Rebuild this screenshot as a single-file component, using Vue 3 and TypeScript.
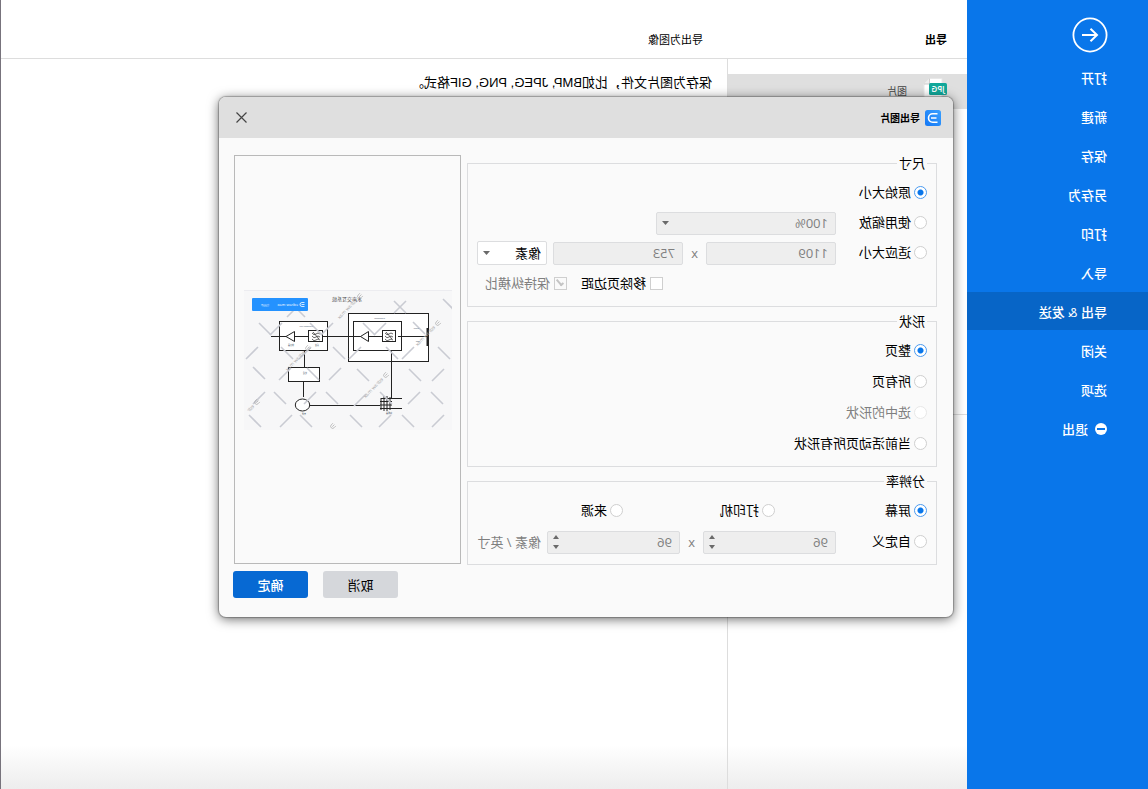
<script setup lang="ts">
import { ref } from 'vue'

const menu = ['打开', '新建', '保存', '另存为', '打印', '导入', '导出 & 发送', '关闭', '选项']
const activeItem = ref('导出 & 发送')

const sizeMode = ref('original')
const shapeMode = ref('page')
const dpiMode = ref('screen')
const removeMargin = ref(false)
const keepRatio = ref(true)

const shapes = [
  { id: 'page', label: '整页', disabled: false },
  { id: 'all', label: '所有页', disabled: false },
  { id: 'selected', label: '选中的形状', disabled: true },
  { id: 'active', label: '当前活动页所有形状', disabled: false },
]

/* Watermark strokes: centre x, centre y, direction (1 rises, -1 falls) */
const strokes: [number, number, number][] = [
  [187, 39, 1], [176, 39, -1], [136, 39, 1], [125, 39, -1], [83, 39, 1], [72, 39, -1], [33, 38, 1],
  [200, 63, -1], [165, 63, 1], [147, 63, -1], [113, 63, 1], [97, 63, -1], [60, 63, 1], [44, 63, -1], [8, 63, 1],
  [193, 83, 1], [167, 84, -1], [139, 84, 1], [117, 84, -1], [89, 85, 1], [37, 85, 1], [14, 85, -1],
  [193, 108, -1], [172, 108, 1], [142, 108, -1], [120, 108, 1], [92, 110, -1], [66, 108, 1], [38, 108, -1], [15, 108, 1],
  [197, 131, 1], [166, 131, -1], [146, 131, 1], [96, 131, 1], [67, 131, -1], [44, 131, 1], [14, 131, -1],
  [159, 21, -1], [153, 21, 1], [52, 17, 1], [52, 17, -1], [3, 15, 1],
]
/* Watermark names: x, y, text that fits before the page edge */
const marks: [number, number, string][] = [
  [144, 58, 'edraw max'],
  [195, 112, 'edr'],
  [119, 136, ''],
  [66, 85, 'edraw max'],
  [14, 33, 'edraw max'],
  [92, 6, 'edraw max'],
]
</script>

<template>
  <div class="page">
    <nav class="sidebar">
      <button class="back" aria-label="返回">
        <svg width="36" height="36" viewBox="0 0 36 36" fill="none" stroke="#fff">
          <circle cx="18" cy="18" r="16.6" stroke-width="1.8" />
          <path d="M26 18H11M17.5 11.8L11 18l6.500 6.200" stroke-width="2" />
        </svg>
      </button>
      <button
        v-for="m in menu"
        :key="m"
        class="item"
        :class="{ active: m === activeItem }"
        @click="activeItem = m"
      >{{ m }}</button>
      <button class="item">
        <svg width="12" height="12" viewBox="0 0 12 12">
          <circle cx="6" cy="6" r="6" fill="#fff" />
          <rect x="2" y="5" width="8" height="2" fill="#0976ea" />
        </svg>
        <span>退出</span>
      </button>
    </nav>

    <div class="main">
      <header class="head">
        <strong class="head-title">导出</strong>
        <span class="head-sub">导出为图像</span>
      </header>
      <div class="columns">
        <section class="formats">
          <a class="format" href="#">
            <svg width="24" height="26" viewBox="0 0 24 26">
              <path d="M5 .5h12.500L23 6v19.500H5z" fill="#fff" stroke="#e8e8e8" />
              <path d="M17.500.5V6H23" fill="#eee" stroke="#ccc" />
              <rect x="0" y="5" width="18" height="12" rx="1.500" fill="#12a89a" />
              <text x="9" y="14" text-anchor="middle" class="jpg">JPG</text>
            </svg>
            <span>图片</span>
          </a>
        </section>
        <section class="detail">保存为图片文件，比如BMP, JPEG, PNG, GIF格式。</section>
      </div>
    </div>

    <div class="dialog" role="dialog" aria-label="导出图片">
      <header class="titlebar">
        <svg width="16" height="16" viewBox="0 0 16 16">
          <defs>
            <linearGradient id="brand" x1="0" y1="0" x2="1" y2="1">
              <stop offset="0" stop-color="#3aa0ff" />
              <stop offset="1" stop-color="#1478f5" />
            </linearGradient>
          </defs>
          <rect width="16" height="16" rx="2.500" fill="url(#brand)" />
          <path d="M3.500 3.800h4.800a4.200 4.200 0 0 1 0 8.400H3.500M4.500 8H10" fill="none" stroke="#fff" stroke-width="1.600" />
        </svg>
        <strong>导出图片</strong>
        <button class="close" aria-label="关闭">
          <svg width="11" height="11" viewBox="0 0 11 11" stroke="#444" stroke-width="1.200">
            <path d="M.5.5l10 10M10.500.5l-10 10" />
          </svg>
        </button>
      </header>

      <div class="body">
        <form class="groups" @submit.prevent>
          <fieldset class="g-size">
            <legend>尺寸</legend>
            <div class="row">
              <label class="opt"><input v-model="sizeMode" type="radio" name="size" value="original">原始大小</label>
            </div>
            <div class="row">
              <label class="opt first"><input v-model="sizeMode" type="radio" name="size" value="zoom">使用缩放</label>
              <span class="field zoom">
                <select disabled aria-label="缩放"><option>100%</option></select>
                <svg class="caret" width="7" height="4" viewBox="0 0 7 4"><path d="M0 0h7L3.500 4z" /></svg>
              </span>
            </div>
            <div class="row">
              <label class="opt first"><input v-model="sizeMode" type="radio" name="size" value="fit">适应大小</label>
              <input class="box grow" type="text" value="1109" disabled aria-label="宽度">
              <span class="by">x</span>
              <input class="box grow" type="text" value="753" disabled aria-label="高度">
              <span class="field unit">
                <select aria-label="单位"><option>像素</option></select>
                <svg class="caret" width="7" height="4" viewBox="0 0 7 4"><path d="M0 0h7L3.500 4z" /></svg>
              </span>
            </div>
            <div class="row checks">
              <label class="opt"><input v-model="removeMargin" type="checkbox">移除页边距</label>
              <label class="opt off"><input v-model="keepRatio" type="checkbox" disabled>保持纵横比</label>
            </div>
          </fieldset>

          <fieldset>
            <legend>形状</legend>
            <div v-for="s in shapes" :key="s.id" class="row">
              <label class="opt" :class="{ off: s.disabled }">
                <input v-model="shapeMode" type="radio" name="shape" :value="s.id" :disabled="s.disabled">{{ s.label }}
              </label>
            </div>
          </fieldset>

          <fieldset>
            <legend>分辨率</legend>
            <div class="row thirds">
              <label class="opt"><input v-model="dpiMode" type="radio" name="dpi" value="screen">屏幕</label>
              <label class="opt"><input v-model="dpiMode" type="radio" name="dpi" value="printer">打印机</label>
              <label class="opt"><input v-model="dpiMode" type="radio" name="dpi" value="source">来源</label>
            </div>
            <div class="row">
              <label class="opt first"><input v-model="dpiMode" type="radio" name="dpi" value="custom">自定义</label>
              <span v-for="n in 2" :key="n" class="field">
                <span v-if="n === 2" class="by">x</span>
                <span class="spin">
                  <input class="box" type="text" value="96" disabled :aria-label="n === 1 ? '水平分辨率' : '垂直分辨率'">
                  <svg class="steps" width="6" height="14" viewBox="0 0 6 14"><path d="M0 4h6L3 0zM0 10h6L3 14z" /></svg>
                </span>
              </span>
              <span class="per">像素 / 英寸</span>
            </div>
          </fieldset>
        </form>

        <div class="side">
          <div class="preview">
            <svg viewBox="0 0 208 140" role="img" aria-label="预览">
              <rect x="0" y="0" width="208" height="140" fill="#f7f7f8" />
              <path d="M0 .5h208" stroke="#ececf0" />
              <rect x="23.500" y="23.500" width="80" height="48" class="w" />
              <rect x="50.500" y="31.500" width="48" height="29" class="w" />
              <rect x="124.500" y="31.500" width="48" height="29" class="w" />
              <rect x="132.500" y="77.500" width="31" height="14" class="w" />
              <g class="l">
                <path d="M24 46.500H54M69 46.500H84M91 46.500H130M143 46.500H157M166 46.500H181" />
                <path d="M60.500 60V108M147.500 60V77M148.500 92V107M72 115.500H142" />
                <path d="M24.500 38V56" stroke-width="2" />
                <path d="M50 108.500H71M50 118.500H72M60 111.500H72M60 115H72M62 107V120M65 106V121M68 106V121M71 108V120" />
                <path d="M83.500 41.500V51.500L91.500 46.500zM157.500 41.500V51.500L166 46.500z" fill="#fff" />
                <rect x="56.500" y="40.500" width="13" height="11" fill="#fff" />
                <rect x="129.500" y="40.500" width="14" height="11" fill="#fff" />
                <path d="M59 44q2-2 4 0t4-1M59 47q2-2 4 0t4-1M59 50q2-2 4 0t4-1M60 49l6-7M132 44q2-2 4 0t4-1M132 47q2-2 4 0t4-1M132 50q2-2 4 0t4-1M133 49l6-7" stroke-width=".7" />
                <ellipse cx="149.500" cy="115" rx="7.200" ry="6" fill="#fff" />
              </g>
              <path
                v-for="(s, i) in strokes"
                :key="i"
                class="x"
                :d="`M${s[0] - 6} ${s[1] + 6 * s[2]}L${s[0] + 6} ${s[1] - 6 * s[2]}`"
              />
              <g v-for="(m, i) in marks" :key="'m' + i" class="mark" :transform="`translate(${m[0]} ${m[1]}) rotate(46)`">
                <path d="M-2-2H.5a2 2 0 0 1 0 4H-2M-2 0h3" />
                <text v-if="m[2]" x="5" y="1.500">{{ m[2] }}</text>
              </g>
              <text x="90" y="11" class="t">水声交互系统</text>
              <rect x="144" y="8" width="56" height="13" rx="1" fill="#2492ff" />
              <path d="M147.500 12.500H150a2 2 0 0 1 0 4H147.500M147.500 14.500h3" fill="none" stroke="#fff" stroke-width=".8" />
              <text x="154" y="16" class="b">edraw max</text>
              <text x="183" y="16" class="b s">亿图图示</text>
              <g class="n">
                <text x="67" y="28.500">Transmitter</text>
                <text x="139" y="37">Processor unit</text>
                <text x="33" y="39">signal</text>
                <text x="32" y="52">data</text>
                <text x="133" y="56">滤波</text>
                <text x="158" y="56">放大器</text>
                <text x="145" y="84">处理</text>
                <text x="60" y="124">换能器</text>
                <text x="146" y="125">电源</text>
              </g>
            </svg>
          </div>
          <div class="actions">
            <button class="btn">取消</button>
            <button class="btn primary">确定</button>
          </div>
        </div>
      </div>
    </div>
  </div>
</template>

<style>
body {
  margin: 0;
  background: #fff;
}
</style>

<style scoped>
.page {
  position: relative;
  display: flex;
  min-height: 100vh;
  overflow: hidden;
  box-sizing: border-box;
  border-right: 1px solid #77737c;
  background: #fff;
  color: #000;
  font: 13px/20px "Open Sans", "Noto Sans CJK SC", sans-serif;
  transform: scaleX(-1);
}
.page *,
.page *::before {
  box-sizing: border-box;
}
button,
input,
select {
  margin: 0;
  font: inherit;
  color: inherit;
}
svg {
  display: block;
  flex: none;
}

.sidebar {
  display: flex;
  flex-direction: column;
  flex: none;
  gap: 1px;
  width: 181px;
  padding-top: 17px;
  background: #0976ea;
  color: #fff;
}
.back {
  width: 36px;
  height: 36px;
  margin: 0 0 4px 40px;
  padding: 0;
  border: 0;
  background: none;
}
.item {
  display: flex;
  align-items: center;
  gap: 7px;
  height: 38px;
  padding: 2px 0 0 41px;
  border: 0;
  background: none;
  font-weight: 500;
  white-space: pre;
}
.item.active {
  background: #0765c7;
}

.main {
  display: flex;
  flex: 1;
  flex-direction: column;
  min-width: 0;
  background: linear-gradient(#fff, #fff) top / 100% calc(100% - 44px) no-repeat, linear-gradient(to top, #ededed, #fff 44px);
}
.head {
  display: flex;
  align-items: center;
  height: 59px;
  padding: 22px 20px 0;
  border-bottom: 1px solid #ddd;
  font-size: 11px;
}
.head-title {
  width: 244px;
}
.columns {
  display: flex;
  flex: 1;
}
.formats {
  width: 240px;
  padding-top: 15px;
  border-right: 1px solid #ddd;
  background: linear-gradient(#ddd, #ddd) 0 355px / 100% 1px no-repeat;
}
.format {
  display: flex;
  align-items: center;
  gap: 16px;
  height: 35px;
  padding: 0 0 2px 20px;
  background: #dfdfdf;
  color: #444;
  font-size: 10px;
  text-decoration: none;
}
.jpg {
  fill: #fff;
  font-size: 8px;
  font-weight: 600;
}
.detail {
  flex: 1;
  padding: 14px 15px;
  font-family: "Liberation Sans", "Noto Sans CJK SC", sans-serif;
}

.dialog {
  position: absolute;
  top: 97px;
  left: 195px;
  right: 218px;
  border-radius: 7px;
  background: #fafafa;
  box-shadow: 0 0 1px 1px rgba(0, 0, 0, .25), 0 2px 12px rgba(0, 0, 0, .6);
}
.titlebar {
  display: flex;
  align-items: center;
  gap: 5px;
  height: 41px;
  padding: 0 17px 0 12px;
  border-radius: 7px 7px 0 0;
  background: #dfdfdf;
  font-size: 10px;
}
.close {
  margin-left: auto;
  padding: 0;
  border: 0;
  background: none;
}
.body {
  display: flex;
  gap: 6px;
  padding: 15px 14px 19px 16px;
}
.groups {
  display: flex;
  flex: 1;
  flex-direction: column;
  gap: 4px;
  min-width: 0;
  padding-bottom: 33px;
}
fieldset {
  display: flex;
  flex-direction: column;
  gap: 7px;
  min-width: 0;
  margin: 0;
  padding: 8px 9px 10px;
  border: 1px solid #dcdddf;
}
.g-size {
  gap: 6px;
  padding-bottom: 11px;
}
legend {
  padding: 0 2px;
}
.row {
  display: flex;
  align-items: center;
  height: 24px;
}
.opt {
  display: flex;
  align-items: center;
  gap: 3px;
  padding-bottom: 2px;
  white-space: nowrap;
}
.opt.first {
  width: 91px;
  flex: none;
}
.off {
  color: #7f7f7f;
}
.opt input {
  appearance: none;
  flex: none;
  width: 13px;
  height: 13px;
  border: 1px solid #cfcfcf;
  background: #fff;
}
.opt input[type="radio"] {
  border-radius: 50%;
}
.opt input[type="radio"]:checked {
  border-color: #4a9af0;
  background: radial-gradient(circle, #0976ea 0 2.500px, #fff 3.500px);
}
.off input[type="radio"] {
  border-color: #e8e8e8;
}
.checks {
  gap: 14px;
  padding-left: 264px;
}
.checks .opt {
  gap: 4px;
  padding-bottom: 0;
}
.opt input[type="checkbox"]:checked {
  display: grid;
  place-items: center;
  background: #fafafa;
}
.opt input[type="checkbox"]:checked::before {
  content: "";
  width: 4px;
  height: 8px;
  margin-top: -2px;
  border: solid #c4c4c4;
  border-width: 0 2px 2px 0;
  transform: rotate(40deg);
}
.thirds .opt {
  flex: none;
  width: 152px;
}
.thirds .opt:last-child {
  width: auto;
}
.box,
select {
  appearance: none;
  width: 100%;
  min-width: 0;
  height: 23px;
  padding: 0 7px;
  border: 1px solid #dcdddf;
  border-radius: 2px;
  background: #fff;
}
.box:disabled,
select:disabled {
  background: #eee;
  color: #7f7f7f;
  opacity: 1;
}
.grow {
  flex: 1;
}
.by {
  width: 23px;
  flex: none;
  color: #7f7f7f;
  text-align: center;
}
.field {
  position: relative;
  display: flex;
  align-items: center;
}
.zoom {
  width: 180px;
}
.unit {
  width: 70px;
  margin-left: 6px;
}
.unit select {
  height: 24px;
  padding-left: 5px;
}
.caret,
.steps {
  position: absolute;
  right: 6px;
  fill: #6a6a6a;
}
.spin {
  position: relative;
  display: flex;
  align-items: center;
  width: 133px;
}
.per {
  margin-left: 6px;
  color: #7f7f7f;
  white-space: nowrap;
}

.side {
  display: flex;
  flex: none;
  flex-direction: column;
  gap: 7px;
  width: 228px;
  padding-top: 2px;
}
.preview {
  display: flex;
  align-items: center;
  flex: 1;
  width: 227px;
  padding-left: 8px;
  border: 1px solid #b9b9b9;
}
.preview svg {
  width: 208px;
}
.actions {
  display: flex;
  justify-content: flex-end;
  gap: 15px;
}
.btn {
  width: 75px;
  height: 27px;
  padding: 0;
  border: 0;
  border-radius: 3px;
  background: #d5d7db;
}
.primary {
  background: #0769d3;
  color: #fff;
  font-weight: 500;
}

.w {
  fill: #fff;
  stroke: #222;
}
.l {
  fill: none;
  stroke: #222;
}
.x {
  stroke: #c9cbd3;
  stroke-width: 1.600;
}
.mark path {
  fill: none;
  stroke: #aaa;
  stroke-width: .7;
}
.mark text {
  fill: #aaa;
  font-size: 5px;
}
.t {
  fill: #444;
  font-size: 5px;
}
.b {
  fill: #fff;
  font-size: 4px;
}
.s {
  font-size: 2px;
}
.n text {
  fill: #456;
  font-size: 2px;
}
</style>
